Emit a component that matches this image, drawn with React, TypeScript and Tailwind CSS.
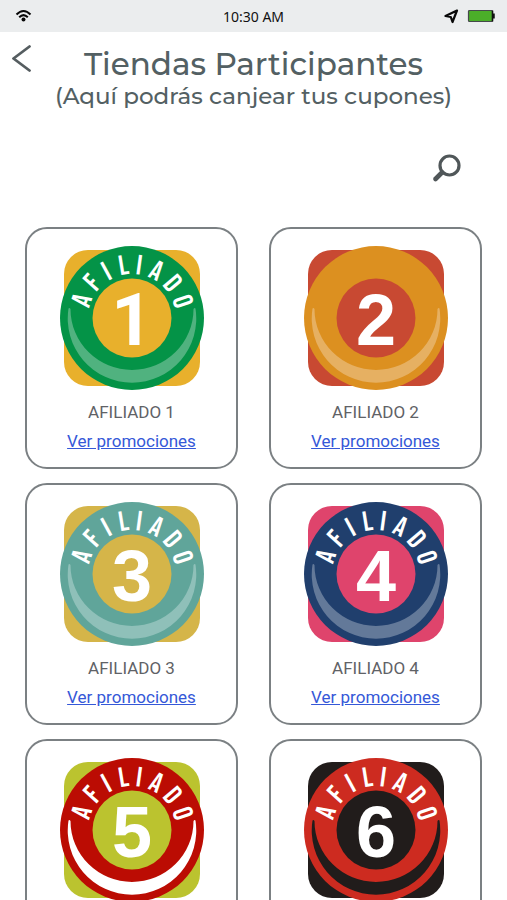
import React from "react";

type Store = {
  id: number;
  square: string;
  ring: string;
  core: string;
  shine: string;
  arc: boolean;
};

const stores: Store[] = [
  { id: 1, square: "#e8b02c", ring: "#049347", core: "#e8b02c", shine: "#50b27f", arc: true },
  { id: 2, square: "#c84932", ring: "#dc9020", core: "#c84932", shine: "#e6b062", arc: false },
  { id: 3, square: "#d5b549", ring: "#60a59a", core: "#d5b549", shine: "#8fc0b9", arc: true },
  { id: 4, square: "#df446c", ring: "#203f6d", core: "#df446c", shine: "#637999", arc: true },
  { id: 5, square: "#bbc32f", ring: "#bb0c03", core: "#bbc32f", shine: "#ffffff", arc: true },
  { id: 6, square: "#211c1b", ring: "#cd2b20", core: "#211c1b", shine: "#211c1b", arc: true },
];

function Badge({ store }: { store: Store }) {
  const pathId = `arc-${store.id}`;
  return (
    <svg viewBox="0 0 144 144" className="block h-36 w-36" role="img" aria-label={`Logo afiliado ${store.id}`}>
      <rect x="4" y="4" width="136" height="136" rx="24" fill={store.square} />
      <circle cx="72" cy="72" r="72" fill={store.ring} />
      <circle cx="72" cy="72" r="39.5" fill={store.core} />
      <path
        d="M8.5 62.5 A64.27 64.27 0 1 0 135.5 62.5 Q134.5 61.5 133.5 63 A61.5 61 0 0 1 10.5 63 Q9.5 61.5 8.5 62.5 Z"
        fill={store.shine}
      />
      {store.arc && (
        <>
          <path id={pathId} d="M28 72 A44 44 0 0 1 116 72" fill="none" />
          <text
            className="font-['Bebas_Neue','Roboto_Condensed','Liberation_Sans_Narrow','Roboto',sans-serif] text-[28px] font-medium"
            fill="#fff"
            textAnchor="middle"
            x="15 32 47 62 75 90 107 124"
          >
            <textPath href={`#${pathId}`}>AFILIADO</textPath>
          </text>
        </>
      )}
      <text
        x="72"
        y="99"
        textAnchor="middle"
        fill="#fff"
        className={
          store.id === 1
            ? "font-['Roboto',sans-serif] text-[72px] font-bold"
            : "font-['Liberation_Sans',Arial,sans-serif] text-[72px] font-bold"
        }
      >
        {store.id}
      </text>
    </svg>
  );
}

function StoreCard({ store }: { store: Store }) {
  return (
    <article className="flex flex-col items-center rounded-[22px] border-2 border-[#7b8083] pt-[17px] pb-4">
      <Badge store={store} />
      <h2 className="mt-3 text-[17px] leading-5 text-[#5f6266]">AFILIADO {store.id}</h2>
      <a href="#promociones" className="mt-[9px] text-[17px] leading-5 text-[#3558d8] underline">
        Ver promociones
      </a>
    </article>
  );
}

export default function App() {
  return (
    <div className="min-h-screen bg-white font-['Roboto',sans-serif]">
      <div className="grid h-8 grid-cols-3 items-center bg-[#ebedee] px-3">
        <svg viewBox="0 0 20 14" className="ml-[3px] h-3.5 w-5" aria-label="Wi-Fi" fill="none" stroke="#080808" strokeWidth="2">
          <path d="M1.500 5.500 Q8.500 -1.500 15.500 5.500" />
          <path d="M4.200 8.300 Q8.500 4 12.800 8.300" />
          <circle cx="8.500" cy="10.500" r="2" fill="#080808" stroke="none" />
        </svg>
        <span className="pt-0.5 text-center font-['Noto_Sans',sans-serif] text-sm leading-5 text-[#111]">10:30 AM</span>
        <div className="flex items-center justify-end gap-2">
          <svg viewBox="0 0 16 16" className="h-4 w-4" aria-label="Ubicación" fill="none" stroke="#080808" strokeWidth="2.200" strokeLinejoin="round">
            <path d="M14 2.500 L2.500 8 L7.800 9 L9.500 14 Z" />
          </svg>
          <svg viewBox="0 0 28 14" className="h-3.5 w-7" aria-label="Batería">
            <rect x="1.500" y="1.500" width="24" height="11" rx="1" fill="#4bae29" stroke="#45494b" strokeWidth="1.200" />
            <path d="M25.500 1.500 V12.500 M27 4.500 V9.500" stroke="#111" strokeWidth="1.500" />
          </svg>
        </div>
      </div>

      <header className="flex items-start px-3 pt-3">
        <button type="button" aria-label="Volver" className="w-5 shrink-0">
          <svg viewBox="0 0 20 30" className="block h-[30px] w-5" fill="none" stroke="#555d60" strokeWidth="2.800" strokeLinecap="round" strokeLinejoin="round">
            <path d="M17.500 2.500 L1.500 14.500 L17.500 26.500" />
          </svg>
        </button>
        <div className="flex-1 pt-1 pr-5 text-center font-['Montserrat',sans-serif] font-medium whitespace-nowrap text-[#536063]">
          <h1 className="text-[31px] leading-8">Tiendas Participantes</h1>
          <p className="text-[23px] leading-8">(Aquí podrás canjear tus cupones)</p>
        </div>
      </header>

      <div className="flex justify-end pt-[41px] pr-[45px]">
        <button type="button" aria-label="Buscar">
          <svg viewBox="0 0 30 30" className="block h-[30px] w-[30px]" fill="none" stroke="#505759">
            <circle cx="17.500" cy="12.500" r="9.500" strokeWidth="3.200" />
            <path d="M10 19.500 L3.500 26" strokeWidth="4.600" strokeLinecap="round" />
          </svg>
        </button>
      </div>

      <main className="grid grid-cols-2 gap-x-[31px] gap-y-3.5 px-[25px] pt-11 pb-6">
        {stores.map((s) => (
          <StoreCard key={s.id} store={s} />
        ))}
      </main>
    </div>
  );
}
